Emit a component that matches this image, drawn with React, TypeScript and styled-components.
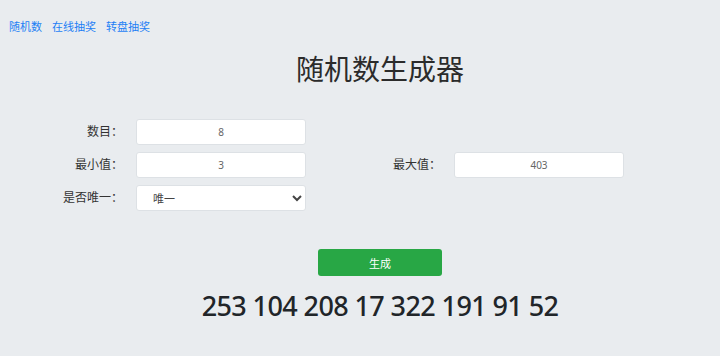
import React, { useState } from "react";
import styled, { createGlobalStyle } from "styled-components";

const GlobalStyle = createGlobalStyle`
  html, body {
    margin: 0;
    padding: 0;
    background: #e9ecef;
    font-family: "Noto Sans", "Noto Sans CJK SC", sans-serif;
    color: #212529;
  }
`;

export default () => {
  const [count, setCount] = useState("8");
  const [min, setMin] = useState("3");
  const [max, setMax] = useState("403");
  const [unique, setUnique] = useState("1");
  const [result, setResult] = useState([253, 104, 208, 17, 322, 191, 91, 52]);

  const generate = () => {
    const n = parseInt(count) || 0;
    const lo = parseInt(min) || 0;
    const hi = parseInt(max) || 0;
    const out: number[] = [];
    while (out.length < n) {
      const v = lo + Math.floor(Math.random() * (hi - lo + 1));
      if (unique === "1" && out.includes(v) && hi - lo + 1 >= n) continue;
      out.push(v);
    }
    setResult(out);
  };

  return (
    <Page>
      <GlobalStyle />
      <Nav>
        <NavLink href="#">随机数</NavLink>
        <NavLink href="#">在线抽奖</NavLink>
        <NavLink href="#">转盘抽奖</NavLink>
      </Nav>
      <Title>随机数生成器</Title>
      <Form>
        <Label>数目：</Label>
        <Input value={count} onChange={(e) => setCount(e.target.value)} />
        <Spacer />
        <Spacer />
        <Label>最小值：</Label>
        <Input value={min} onChange={(e) => setMin(e.target.value)} />
        <Label>最大值：</Label>
        <Input value={max} onChange={(e) => setMax(e.target.value)} />
        <Label>是否唯一：</Label>
        <Select value={unique} onChange={(e) => setUnique(e.target.value)}>
          <option value="1">唯一</option>
          <option value="0">不唯一</option>
        </Select>
      </Form>
      <Actions>
        <Button onClick={generate}>生成</Button>
      </Actions>
      <Result>{result.join(" ")}</Result>
    </Page>
  );
};

const Page = styled.div`
  padding: 17px 0 0 0;
`;

const Nav = styled.div`
  display: flex;
  gap: 10px;
  padding-left: 9px;
  height: 18px;
  align-items: center;
`;

const NavLink = styled.a`
  font-size: 11px;
  color: #1e7ff5;
  text-decoration: none;
`;

const Title = styled.h1`
  margin: 14px 0 0 40px;
  text-align: center;
  font-size: 28px;
  font-weight: 400;
  line-height: 40px;
  color: #2b2b2b;
`;

const Form = styled.div`
  display: grid;
  grid-template-columns: 123px 170px 122px 170px;
  column-gap: 13px;
  row-gap: 7px;
  margin-top: 30px;
`;

const Label = styled.div`
  font-size: 12px;
  color: #333;
  text-align: right;
  line-height: 26px;
`;

const Spacer = styled.div``;

const Input = styled.input`
  box-sizing: border-box;
  height: 26px;
  width: 170px;
  border: 1px solid #dde1e5;
  border-radius: 3px;
  background: #fff;
  text-align: center;
  font-family: "Noto Sans", "Noto Sans CJK SC", sans-serif;
  font-size: 10px;
  color: #666;
  outline: none;
`;

const Select = styled.select`
  box-sizing: border-box;
  height: 26px;
  width: 170px;
  border: 1px solid #dde1e5;
  border-radius: 3px;
  background: #fff;
  padding: 0 0 0 12px;
  font-family: "Noto Sans", "Noto Sans CJK SC", sans-serif;
  font-size: 11px;
  color: #444;
  outline: none;
`;

const Actions = styled.div`
  display: flex;
  justify-content: center;
  padding-left: 40px;
  margin-top: 38px;
`;

const Button = styled.button`
  width: 124px;
  height: 27px;
  border: none;
  border-radius: 3px;
  background: #28a745;
  color: #fff;
  font-family: "Noto Sans", "Noto Sans CJK SC", sans-serif;
  font-size: 11px;
  cursor: pointer;
`;

const Result = styled.div`
  margin-top: 10px;
  padding-left: 40px;
  text-align: center;
  font-size: 27px;
  font-weight: 500;
  letter-spacing: -0.6px;
  line-height: 40px;
  color: #212529;
`;
